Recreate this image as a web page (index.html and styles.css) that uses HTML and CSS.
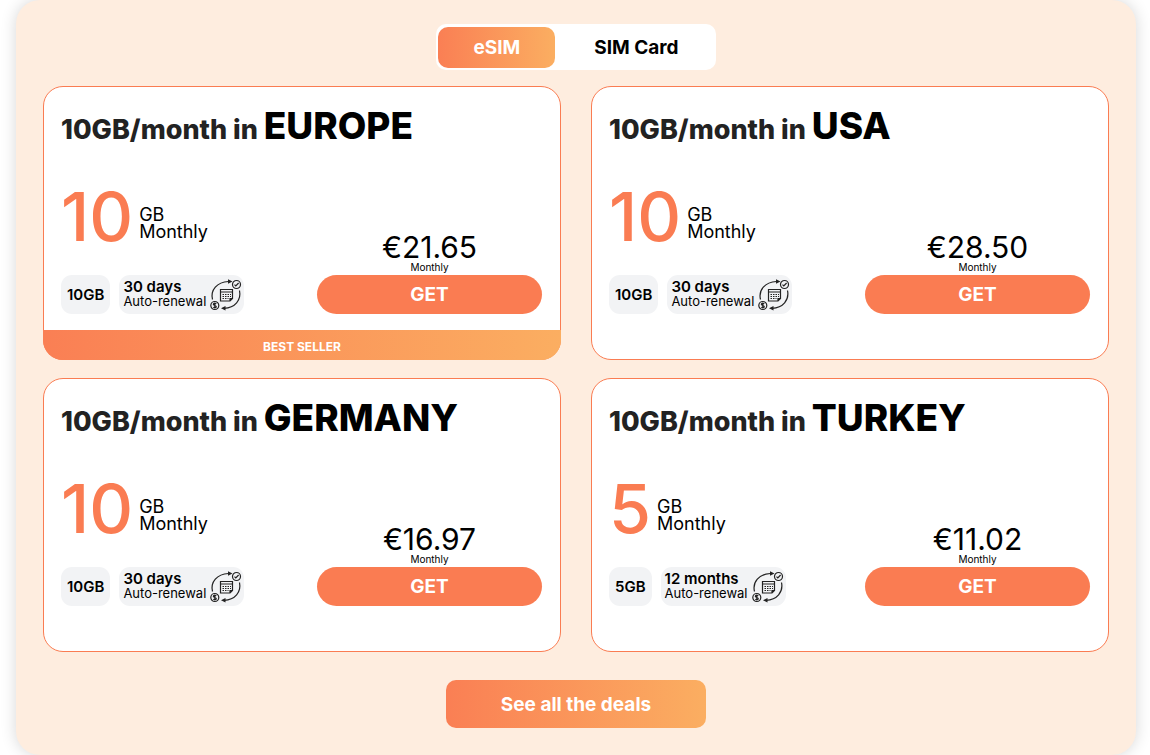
FILE: index.html
```html
<!DOCTYPE html>
<html lang="en">
<head>
<meta charset="utf-8">
<meta name="viewport" content="width=device-width, initial-scale=1">
<title>eSIM deals</title>
<link rel="stylesheet" href="styles.css">
</head>
<body>
<svg class="sprite" aria-hidden="true">
  <symbol id="renewal" viewBox="0 0 32 32">
    <g fill="none" stroke="#222" stroke-width="1.200">
      <path d="M2.500 20.500C.2 11 7 3 18.500 2.500M29.500 11.500C31.500 21 25 28.800 14 29.300"/>
      <circle cx="26.500" cy="5.500" r="4"/>
      <path d="M24.500 5.700l1.300 1.300 2.800-3"/>
      <circle cx="4.800" cy="26.500" r="4"/>
      <path d="M6.300 24.800c-1-.9-3-.6-3 .5 0 1.400 3 .9 3 2.400 0 1.100-2 1.300-3 .4M4.800 23.500v6"/>
      <path d="M10.500 10.500h12v9L20 22h-9.500zM10.500 13h12M20 22v-2.500h2.500"/>
    </g>
    <path fill="#222" d="M18 .3l4.500 2.200L18 4.800zM15.500 27l-4.500 2.300 4.500 2.200z"/>
    <path fill="none" stroke="#222" stroke-dasharray="1.500 1" d="M12.500 15.500h8.500M12.500 17.500h8.500M12.500 19.500h6"/>
  </symbol>
</svg>
<main class="panel">
  <div class="switch">
    <button class="switch-option active" type="button" aria-pressed="true">eSIM</button>
    <button class="switch-option" type="button" aria-pressed="false">SIM Card</button>
  </div>

  <section class="deals">
    <article class="card">
      <h2 class="title">10GB/month in <strong>EUROPE</strong></h2>
      <div class="offer">
        <div class="plan">
          <div class="amount"><span class="number">10</span><span class="unit">GB<br>Monthly</span></div>
          <div class="tags">
            <span class="tag size">10GB</span>
            <span class="tag"><span class="term"><b>30 days</b><span>Auto-renewal</span></span><svg class="icon" aria-hidden="true"><use href="#renewal"/></svg></span>
          </div>
        </div>
        <div class="buy">
          <span class="price">€21.65</span><span class="period">Monthly</span>
          <button class="get" type="button">GET</button>
        </div>
      </div>
      <div class="ribbon">BEST SELLER</div>
    </article>

    <article class="card">
      <h2 class="title">10GB/month in <strong>USA</strong></h2>
      <div class="offer">
        <div class="plan">
          <div class="amount"><span class="number">10</span><span class="unit">GB<br>Monthly</span></div>
          <div class="tags">
            <span class="tag size">10GB</span>
            <span class="tag"><span class="term"><b>30 days</b><span>Auto-renewal</span></span><svg class="icon" aria-hidden="true"><use href="#renewal"/></svg></span>
          </div>
        </div>
        <div class="buy">
          <span class="price">€28.50</span><span class="period">Monthly</span>
          <button class="get" type="button">GET</button>
        </div>
      </div>
    </article>

    <article class="card">
      <h2 class="title">10GB/month in <strong>GERMANY</strong></h2>
      <div class="offer">
        <div class="plan">
          <div class="amount"><span class="number">10</span><span class="unit">GB<br>Monthly</span></div>
          <div class="tags">
            <span class="tag size">10GB</span>
            <span class="tag"><span class="term"><b>30 days</b><span>Auto-renewal</span></span><svg class="icon" aria-hidden="true"><use href="#renewal"/></svg></span>
          </div>
        </div>
        <div class="buy">
          <span class="price">€16.97</span><span class="period">Monthly</span>
          <button class="get" type="button">GET</button>
        </div>
      </div>
    </article>

    <article class="card">
      <h2 class="title">10GB/month in <strong>TURKEY</strong></h2>
      <div class="offer">
        <div class="plan">
          <div class="amount"><span class="number">5</span><span class="unit">GB<br>Monthly</span></div>
          <div class="tags">
            <span class="tag size">5GB</span>
            <span class="tag"><span class="term"><b>12 months</b><span>Auto-renewal</span></span><svg class="icon" aria-hidden="true"><use href="#renewal"/></svg></span>
          </div>
        </div>
        <div class="buy">
          <span class="price">€11.02</span><span class="period">Monthly</span>
          <button class="get" type="button">GET</button>
        </div>
      </div>
    </article>
  </section>

  <button class="all-deals" type="button">See all the deals</button>
</main>
</body>
</html>
```
FILE: styles.css
```css
* { box-sizing: border-box; }

:root {
  --orange: #fa7c52;
  --fade: linear-gradient(90deg, #fa7f54, #fbae61);
}

body {
  margin: 0;
  background: #fff;
  color: #000;
  font-family: Inter, "Open Sans", sans-serif;
}

button {
  border: 0;
  padding: 0;
  color: inherit;
  font-family: inherit;
  cursor: pointer;
}

.sprite { display: none; }

.panel {
  display: flex;
  flex-direction: column;
  align-items: center;
  margin: 0 14px 0 16px;
  padding: 24px 27px 27px;
  border-radius: 24px;
  background: #feeddf;
  box-shadow: 0 0 16px rgba(0, 0, 0, 0.16);
}

.switch {
  display: flex;
  gap: 4px;
  padding: 3px 2px 2px;
  border-radius: 10px;
  background: #fff;
}

.switch-option {
  height: 41px;
  padding: 0 35px;
  border-radius: 10px;
  background: none;
  font-size: 19px;
  font-weight: 700;
}

.switch-option.active {
  background: var(--fade);
  color: #fff;
}

.deals {
  display: grid;
  grid-template-columns: 1fr 1fr;
  gap: 18px 30px;
  align-self: stretch;
  margin: 16px 0 28px;
}

.card {
  display: flex;
  flex-direction: column;
  padding: 21px 18px 45px 17px;
  border: 1px solid var(--orange);
  border-radius: 20px;
  background: #fff;
}

.card:has(.ribbon) { padding-bottom: 0; }

.title {
  margin: 0 0 30px;
  color: #222;
  font-size: 27px;
  font-weight: 800;
  line-height: 44px;
}

.title strong {
  color: #000;
  font-size: 37px;
  font-weight: 800;
  line-height: 36px;
}

.offer {
  display: flex;
  justify-content: space-between;
  align-items: flex-end;
}

.amount {
  display: flex;
  align-items: flex-end;
  gap: 6px;
  margin-bottom: 25px;
}

.number {
  color: var(--orange);
  font-size: 68px;
  font-weight: 500;
  line-height: 68px;
}

.unit {
  padding-bottom: 10px;
  font-size: 18px;
  font-weight: 400;
  line-height: 17px;
}

.tags {
  display: flex;
  gap: 9px;
}

.tag {
  display: flex;
  align-items: center;
  gap: 4px;
  height: 39px;
  padding: 0 2px 0 4px;
  border-radius: 11px;
  background: #f2f3f5;
}

.size {
  padding: 0 6px;
  font-size: 15px;
  font-weight: 600;
}

.term {
  display: flex;
  flex-direction: column;
  padding-bottom: 2px;
  font-size: 13px;
  line-height: 14px;
}

.term b {
  font-size: 15px;
  font-weight: 600;
}

.icon {
  width: 32px;
  height: 32px;
}

.buy {
  display: flex;
  flex-direction: column;
  align-items: center;
  width: 225px;
}

.price {
  font-size: 30px;
  line-height: 30px;
}

.period {
  margin-bottom: 3px;
  font-size: 10px;
  line-height: 10px;
}

.get {
  align-self: stretch;
  height: 39px;
  border-radius: 20px;
  background: var(--orange);
  color: #fff;
  font-size: 19px;
  font-weight: 700;
}

.ribbon {
  margin: 16px -19px -1px -18px;
  padding-top: 3px;
  border-radius: 0 0 20px 20px;
  background: var(--fade);
  color: #fff;
  font-size: 12px;
  font-weight: 700;
  line-height: 27px;
  text-align: center;
}

.all-deals {
  height: 48px;
  padding: 0 55px;
  border-radius: 10px;
  background: var(--fade);
  color: #fff;
  font-size: 19px;
  font-weight: 700;
}
```
